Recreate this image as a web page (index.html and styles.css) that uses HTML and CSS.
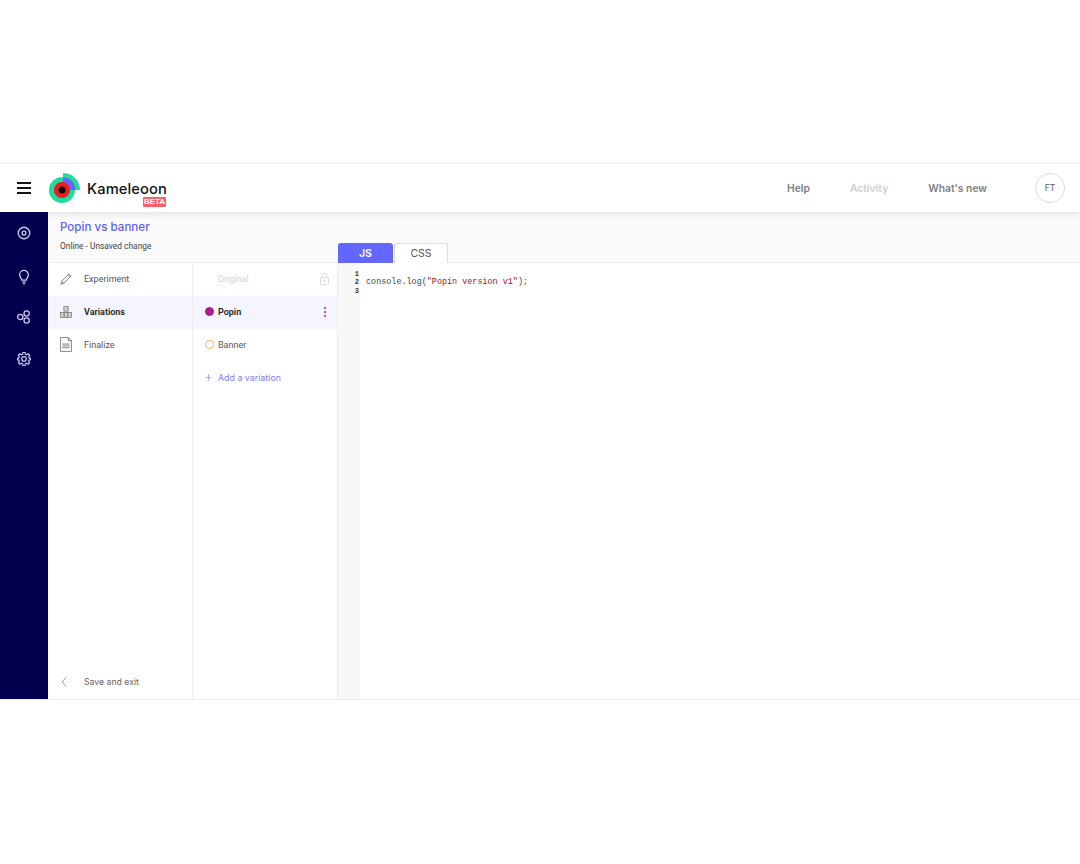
FILE: index.html
```html
<!DOCTYPE html>
<html lang="en">
<head>
<meta charset="utf-8">
<title>Kameleoon</title>
<link rel="stylesheet" href="styles.css">
</head>
<body>
<div class="frame">
  <header class="topbar">
    <div class="burger"><span></span><span></span><span></span></div>
    <div class="logo">
      <svg class="logo-mark" width="32" height="32" viewBox="0 0 32 32">
        <circle cx="13" cy="18" r="13" fill="#1fdba0"/>
        <path d="M14 1 A17 17 0 0 1 31 18 H14 Z" fill="#1fdba0"/>
        <path d="M14 5.500 A12.500 12.500 0 0 1 26.500 18 H14 Z" fill="#6c63ff"/>
        <circle cx="13" cy="18" r="8" fill="#f01c1c"/>
        <circle cx="13" cy="18" r="3.500" fill="#0a0a0a"/>
      </svg>
      <span class="logo-name">Kameleoon</span>
      <span class="beta">BETA</span>
    </div>
    <nav class="topnav">
      <a class="nav-help">Help</a>
      <a class="nav-activity">Activity</a>
      <a class="nav-new">What's new</a>
    </nav>
    <div class="avatar">FT</div>
  </header>
  <div class="app">
    <aside class="rail">
      <div class="rail-row"><svg width="14" height="14" viewBox="0 0 16 16" fill="none" stroke="#c9c8f2" stroke-width="1.500"><circle cx="8" cy="8" r="6.600"/><circle cx="8" cy="8" r="2.200"/></svg></div>
      <div class="rail-row rail-row-low"><svg width="14" height="16" viewBox="0 0 16 18" fill="none" stroke="#c9c8f2" stroke-width="1.500"><path d="M5.500 12.500 C5.300 10.500 3 9.500 3 6.500 A5 5 0 0 1 13 6.500 C13 9.500 10.700 10.500 10.500 12.500 Z"/><path d="M6 14.800 H10 M7 16.800 H9"/></svg></div>
      <div class="rail-row"><svg width="14" height="14" viewBox="0 0 16 16" fill="none" stroke="#c9c8f2" stroke-width="1.500"><circle cx="11" cy="4" r="3"/><circle cx="3.800" cy="8" r="3"/><circle cx="11" cy="12" r="3"/></svg></div>
      <div class="rail-row"><svg width="14" height="14" viewBox="0 0 16 16" fill="none" stroke="#c9c8f2" stroke-width="1.400"><path d="M6.800 .5 H9.200 L9.600 2.500 L11 3.100 L12.800 2 L14.400 3.700 L13.300 5.400 L13.900 6.800 L15.500 7.200 V8.800 L13.900 9.200 L13.300 10.600 L14.400 12.300 L12.800 14 L11 12.900 L9.600 13.500 L9.200 15.500 H6.800 L6.400 13.500 L5 12.900 L3.200 14 L1.600 12.300 L2.700 10.600 L2.100 9.200 L.5 8.800 V7.200 L2.100 6.800 L2.700 5.400 L1.600 3.700 L3.200 2 L5 3.100 L6.400 2.500 Z"/><circle cx="8" cy="8" r="2.600"/></svg></div>
    </aside>
    <div class="workspace">
      <div class="subhead">
        <div class="titles">
          <h1 class="title">Popin vs banner</h1>
          <p class="status">Online - Unsaved change</p>
        </div>
        <div class="tabs">
          <div class="tab tab-on">JS</div>
          <div class="tab tab-off">CSS</div>
        </div>
      </div>
      <div class="panes">
        <div class="steps">
          <div class="step">
            <svg class="step-icon" width="12" height="12" viewBox="0 0 14 14" fill="none" stroke="#707070" stroke-width="1"><path d="M1 13 L2 9.500 L10.500 1 L13 3.500 L4.500 12 Z M2 9.500 L4.500 12 M9 2.500 L11.500 5"/></svg>
            <span>Experiment</span>
          </div>
          <div class="step step-on">
            <svg class="step-icon" width="12" height="12" viewBox="0 0 14 14" fill="#cfcfcf" stroke="#707070" stroke-width=".8"><rect x="4.500" y=".5" width="5" height="5.500"/><rect x=".5" y="7.500" width="4.300" height="6"/><rect x="4.900" y="7.500" width="4.200" height="6"/><rect x="9.200" y="7.500" width="4.300" height="6"/></svg>
            <span>Variations</span>
          </div>
          <div class="step">
            <svg class="step-icon" width="12" height="15" viewBox="0 0 13 16" fill="none" stroke="#707070" stroke-width=".9"><path d="M.5 .5 H9 L12.500 4 V15.500 H.5 Z M9 .5 V4 H12.500"/><path d="M2.500 7.500 H10.500 M2.500 9.500 H10.500 M2.500 11.500 H10.500"/></svg>
            <span>Finalize</span>
          </div>
          <div class="save">
            <svg class="save-icon" width="6" height="10" viewBox="0 0 6 10" fill="none" stroke="#888" stroke-width=".9"><path d="M5 .5 L1 5 L5 9.500"/></svg>
            <span>Save and exit</span>
          </div>
        </div>
        <div class="vars">
          <div class="var var-orig">
            <span class="var-name">Original</span>
            <svg class="lock" width="9" height="12" viewBox="0 0 9 12" fill="none" stroke="#d6d6d6" stroke-width=".9"><rect x=".5" y="4.500" width="8" height="7" rx="1"/><path d="M2 4.500 V3 A2.500 2.500 0 0 1 7 3 V4.500"/><circle cx="4.500" cy="8" r="1"/></svg>
          </div>
          <div class="var var-on">
            <span class="dot dot-fill"></span>
            <span class="var-name">Popin</span>
            <span class="kebab"><i></i><i></i><i></i></span>
          </div>
          <div class="var">
            <span class="dot dot-ring"></span>
            <span class="var-name">Banner</span>
          </div>
          <div class="var var-add">
            <span class="plus">+</span>
            <span class="add-label">Add a variation</span>
          </div>
        </div>
        <div class="editor">
          <div class="gutter"><div>1</div><div>2</div><div>3</div></div>
          <div class="code">
            <div class="line">&nbsp;</div>
            <div class="line">console.log(<span class="str">"Popin version v1"</span>);</div>
          </div>
        </div>
      </div>
    </div>
  </div>
</div>
</body>
</html>
```
FILE: styles.css
```css
* { box-sizing: border-box; }
html, body { margin: 0; padding: 0; background: #fff; }
body { font-family: "Roboto", sans-serif; color: #555; }
.frame { height: 864px; padding-top: 163px; }
.topbar {
  height: 49px; border-top: 1px solid #f0f0f0; background: #fff;
  display: flex; align-items: center; position: relative; z-index: 2;
  box-shadow: 0 2px 6px rgba(0,0,0,.1);
}
.burger { width: 14px; margin-left: 17px; display: flex; flex-direction: column; gap: 3px; }
.burger span { display: block; width: 14px; height: 2px; background: #111; }
.logo { margin-left: 18px; display: flex; align-items: center; position: relative; height: 32px; }
.logo-mark { display: block; }
.logo-name { font-family: "Inter", sans-serif; font-size: 14.700px; font-weight: 500; color: #111; margin-left: 6px; position: relative; top: 1px; letter-spacing: .1px; }
.beta { position: absolute; left: 94px; top: 25px; width: 23px; height: 10px; background: #f9606a; color: #fff; font: 700 8px/10px "Liberation Sans", sans-serif; text-align: center; border-radius: 1px; }
.topnav { margin-left: auto; display: flex; gap: 40px; font-family: "Inter", sans-serif; font-size: 10.300px; font-weight: 600; color: #808080; }
.nav-activity { color: #cfcfcf; }
.avatar { width: 30px; height: 30px; margin: 0 15px 0 48px; border: 1px solid #dcdcdc; border-radius: 50%; display: flex; align-items: center; justify-content: center; font-size: 9px; color: #666; }
.app { display: flex; height: 487px; border-bottom: 1px solid #eee; box-sizing: content-box; }
.rail { width: 48px; background: #03004f; flex: none; }
.rail-row { height: 42px; display: flex; align-items: center; justify-content: center; }
.rail-row-low { padding-top: 3px; }
.rail-row svg { display: block; }
.workspace { flex: 1; display: flex; flex-direction: column; min-width: 0; }
.subhead { height: 51px; background: #fafafa; border-bottom: 1px solid #eee; display: flex; }
.titles { width: 290px; padding: 8px 0 0 12px; }
.title { margin: 0; font-family: "Inter", sans-serif; font-size: 11.600px; line-height: 14px; font-weight: 500; color: #5f5fff; }
.status { margin: 5px 0 0; font-size: 8.400px; line-height: 14px; color: #444; }
.tabs { display: flex; align-self: flex-end; gap: 1px; margin-bottom: -1px; }
.tab { height: 20px; display: flex; align-items: center; justify-content: center; font-family: "Inter", sans-serif; font-size: 10.500px; border-radius: 3px 3px 0 0; }
.tab-on { width: 55px; background: #6366ff; color: #fff; font-weight: 600; }
.tab-off { width: 54px; background: #fff; color: #555; border: 1px solid #ddd; border-bottom: 0; }
.panes { flex: 1; display: flex; min-height: 0; }
.steps { width: 145px; border-right: 1px solid #eee; display: flex; flex-direction: column; font-size: 9px; }
.step { height: 33px; display: flex; align-items: center; padding: 0 0 2px 12px; color: #555; }
.step span { margin-left: 12px; }
.step-icon { width: 12px; flex: none; }
.step-on { background: #f5f5ff; color: #222; font-weight: 600; }
.save { margin-top: auto; height: 34px; display: flex; align-items: center; padding-left: 13px; color: #666; font-family: "Inter", sans-serif; font-size: 8.700px; }
.save span { margin-left: 17px; }
.vars { width: 145px; border-right: 1px solid #eee; font-size: 9px; flex: none; }
.var { height: 33px; display: flex; align-items: center; padding: 0 8px 2px 12px; color: #555; }
.var-name { margin-left: 4px; }
.var-orig { color: #d4d4d4; justify-content: space-between; padding-left: 25px; }
.var-orig .var-name { margin: 0; }
.var-on { background: #f5f5ff; color: #222; font-weight: 600; }
.dot { width: 9px; height: 9px; border-radius: 50%; flex: none; }
.dot-fill { background: #b5178f; border: 1px solid #8e2a80; }
.dot-ring { border: 1.500px solid #f5b26b; }
.kebab { margin-left: auto; margin-right: 3px; display: flex; flex-direction: column; gap: 2px; }
.kebab i { display: block; width: 2px; height: 2px; background: #b5178f; border-radius: 50%; }
.var-add { color: #7c7cff; }
.plus { width: 9px; font-size: 12px; line-height: 12px; font-weight: 300; }
.add-label { margin-left: 4px; font-family: "Inter", sans-serif; font-size: 8.850px; }
.editor { flex: 1; display: flex; background: #fff; font-family: "Liberation Mono", monospace; }
.gutter { width: 22px; background: #f8f8f8; padding: 7px 1px 0 0; text-align: right; color: #333; font-weight: 700; font-size: 7px; line-height: 8.400px; }
.code { padding: 7px 0 0 6px; color: #444; font-size: 8.450px; line-height: 8.400px; }
.str { color: #a11; }
```
